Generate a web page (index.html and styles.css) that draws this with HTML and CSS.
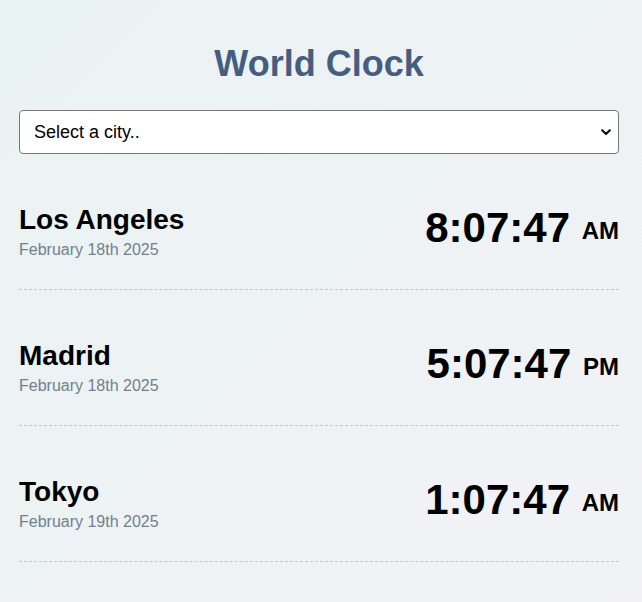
FILE: index.html
```html
<!DOCTYPE html>
<html lang="en">
<head>
<meta charset="utf-8">
<title>World Clock</title>
<link rel="stylesheet" href="styles.css">
</head>
<body>
<div class="container">
  <h1 class="title">World Clock</h1>
  <div class="select-wrap">
    <select class="city-select">
      <option>Select a city..</option>
      <option>Los Angeles</option>
      <option>Madrid</option>
      <option>Tokyo</option>
    </select>
    <svg class="select-arrow" width="10" height="7" viewBox="0 0 10 7" aria-hidden="true">
      <path d="M1.2 1.3 L5 5 L8.8 1.3" fill="none" stroke="#111" stroke-width="2.2" stroke-linecap="round" stroke-linejoin="round"/>
    </svg>
  </div>
  <div class="cities">
    <div class="city">
      <div class="city-info">
        <h2 class="city-name">Los Angeles</h2>
        <div class="city-date">February 18th 2025</div>
      </div>
      <div class="city-time">8:07:47 <span class="ampm">AM</span></div>
    </div>
    <div class="city">
      <div class="city-info">
        <h2 class="city-name">Madrid</h2>
        <div class="city-date">February 18th 2025</div>
      </div>
      <div class="city-time">5:07:47 <span class="ampm">PM</span></div>
    </div>
    <div class="city">
      <div class="city-info">
        <h2 class="city-name">Tokyo</h2>
        <div class="city-date">February 19th 2025</div>
      </div>
      <div class="city-time">1:07:47 <span class="ampm">AM</span></div>
    </div>
  </div>
</div>
</body>
</html>
```
FILE: styles.css
```css
html, body {
  margin: 0;
  padding: 0;
}
body {
  min-height: 100vh;
  background: linear-gradient(135deg, #e9f3f2 0%, #eef2f4 50%, #f2f2f6 100%);
  font-family: "Liberation Sans", Arial, sans-serif;
  color: #000;
}
.container {
  width: 600px;
  margin-left: 19px;
  padding-top: 43px;
}
.title {
  margin: 0 0 25px;
  text-align: center;
  font-size: 36px;
  font-weight: 700;
  line-height: normal;
  color: #465d80;
}
.select-wrap {
  position: relative;
}
.city-select {
  display: block;
  width: 100%;
  height: 44px;
  margin: 0;
  padding: 0 10px 0 14px;
  -webkit-appearance: none;
  appearance: none;
  font-family: "Liberation Sans", Arial, sans-serif;
  font-size: 18px;
  color: #000;
  background: #fff;
  border: 1px solid #767676;
  border-radius: 4px;
}
.select-arrow {
  position: absolute;
  right: 8px;
  top: 19px;
  pointer-events: none;
}
.city {
  display: flex;
  justify-content: space-between;
  align-items: flex-start;
  padding: 50px 0 30px;
  border-bottom: 1px dashed #c4c6c9;
}
.city-name {
  margin: 0 0 6px;
  font-size: 28px;
  line-height: 31px;
  font-weight: 700;
}
.city-date {
  font-size: 16px;
  line-height: 18px;
  color: #708090;
}
.city-time {
  font-size: 42px;
  font-weight: 700;
  line-height: normal;
}
.ampm {
  font-size: 24px;
  vertical-align: 3px;
}
```
